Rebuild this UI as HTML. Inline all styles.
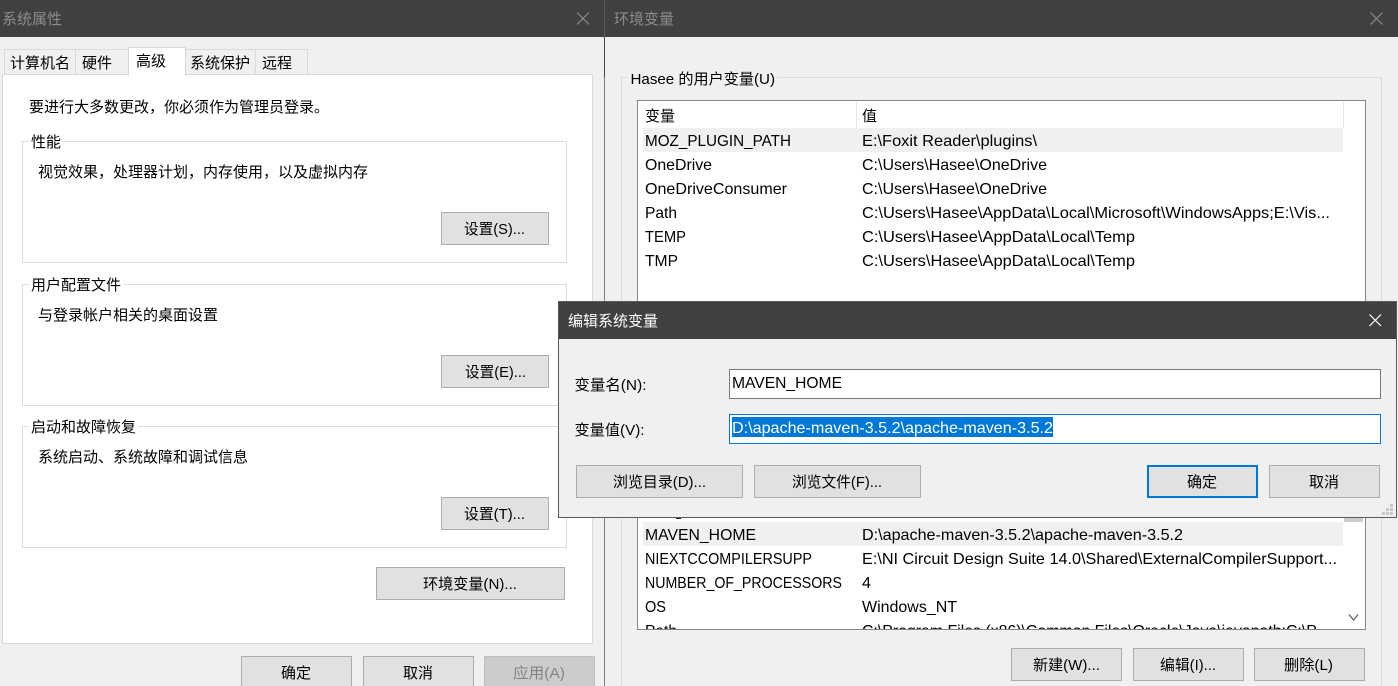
<!DOCTYPE html>
<html lang="zh-CN">
<head>
<meta charset="utf-8">
<title>环境变量</title>
<style>
html,body{margin:0;padding:0;width:1398px;height:686px;overflow:hidden;background:#f0f0f0}
svg{display:block;overflow:hidden}
text{font-family:"Liberation Sans","Noto Sans CJK SC",sans-serif;font-size:15px;fill:#000;white-space:pre}
text.l{font-size:16px}
.g{fill:#8c8c8c}
.w{fill:#fff}
.d{fill:#838383}
.btn{fill:#e1e1e1;stroke:#adadad;stroke-width:1}
.grp{fill:#fff;stroke:#dcdcdc;stroke-width:1}
.tab{fill:#f0f0f0;stroke:#d9d9d9;stroke-width:1}
.x{stroke-width:1.2;fill:none}
</style>
</head>
<body>
<svg width="1398" height="686" viewBox="0 0 1398 686" xmlns="http://www.w3.org/2000/svg">
<defs>
<clipPath id="listclip"><rect x="638" y="101" width="727" height="528"/></clipPath>
</defs>
<rect width="1398" height="686" fill="#f0f0f0"/>

<!-- Left window -->
<rect x="0" y="0" width="1398" height="37" fill="#404040"/>
<rect x="604" y="0" width="1" height="37" fill="#5a5a5a"/>
<rect x="604" y="37" width="1" height="40" fill="#444"/>
<rect x="604" y="77" width="1" height="609" fill="#808080"/>
<text x="2" y="24" class="g">系统属性</text>
<path d="M577 12.500L589 24.500M589 12.500L577 24.500" class="x" stroke="#8c8c8c"/>

<rect x="2.500" y="74.500" width="590" height="569" fill="#fff" stroke="#d9d9d9"/>
<rect x="4.500" y="49.500" width="71" height="25" class="tab"/>
<rect x="75.500" y="49.500" width="53" height="25" class="tab"/>
<rect x="185.500" y="49.500" width="70" height="25" class="tab"/>
<rect x="255.500" y="49.500" width="52" height="25" class="tab"/>
<rect x="128.500" y="47.500" width="57" height="28" fill="#fff" stroke="#d9d9d9"/>
<rect x="129" y="73" width="56" height="4" fill="#fff"/>
<text x="10" y="68">计算机名</text>
<text x="82" y="68">硬件</text>
<text x="136" y="66">高级</text>
<text x="190" y="68">系统保护</text>
<text x="262" y="68">远程</text>

<text x="29" y="112">要进行大多数更改，你必须作为管理员登录。</text>

<rect x="22.500" y="141.500" width="544" height="121" class="grp"/>
<rect x="29" y="135" width="34" height="14" fill="#fff"/>
<text x="31" y="147">性能</text>
<text x="38" y="177">视觉效果，处理器计划，内存使用，以及虚拟内存</text>
<rect x="441.500" y="212.500" width="107" height="32" class="btn"/>
<text x="464" y="234" textLength="61" lengthAdjust="spacingAndGlyphs">设置(S)...</text>

<rect x="22.500" y="284.500" width="544" height="121" class="grp"/>
<rect x="29" y="278" width="94" height="14" fill="#fff"/>
<text x="31" y="290">用户配置文件</text>
<text x="38" y="320">与登录帐户相关的桌面设置</text>
<rect x="441.500" y="355.500" width="107" height="32" class="btn"/>
<text x="465" y="377" textLength="61" lengthAdjust="spacingAndGlyphs">设置(E)...</text>

<rect x="22.500" y="426.500" width="544" height="121" class="grp"/>
<rect x="29" y="420" width="109" height="14" fill="#fff"/>
<text x="31" y="432">启动和故障恢复</text>
<text x="38" y="462">系统启动、系统故障和调试信息</text>
<rect x="441.500" y="497.500" width="107" height="32" class="btn"/>
<text x="464" y="519" textLength="61" lengthAdjust="spacingAndGlyphs">设置(T)...</text>

<rect x="376.500" y="567.500" width="188" height="32" class="btn"/>
<text x="423" y="589" textLength="94" lengthAdjust="spacingAndGlyphs">环境变量(N)...</text>

<rect x="241" y="656" width="111" height="30" fill="#e1e1e1"/>
<path d="M241.500 686V656.500H351.500V686" fill="none" stroke="#adadad"/>
<text x="281" y="678">确定</text>
<rect x="363" y="656" width="111" height="30" fill="#e1e1e1"/>
<path d="M363.500 686V656.500H473.500V686" fill="none" stroke="#adadad"/>
<text x="403" y="678">取消</text>
<rect x="484" y="656" width="111" height="30" fill="#cccccc"/>
<path d="M484.500 686V656.500H594.500V686" fill="none" stroke="#bfbfbf"/>
<text x="513" y="678" class="d" textLength="52" lengthAdjust="spacingAndGlyphs">应用(A)</text>

<!-- Right window -->
<text x="614" y="24" class="g">环境变量</text>
<path d="M1370.500 12.500L1382.500 24.500M1382.500 12.500L1370.500 24.500" class="x" stroke="#8c8c8c"/>

<path d="M621.500 686V77.500H1381.500V686" fill="none" stroke="#dcdcdc"/>
<rect x="628" y="70" width="149" height="16" fill="#f0f0f0"/>
<text x="630.500" y="84" textLength="144.500" lengthAdjust="spacingAndGlyphs">Hasee 的用户变量(U)</text>

<rect x="637.500" y="100.500" width="728" height="529" fill="#fff" stroke="#828790"/>
<rect x="856" y="102" width="1" height="26" fill="#e5e5e5"/>
<rect x="1343" y="102" width="1" height="26" fill="#e5e5e5"/>
<text x="645" y="121">变量</text>
<text x="862" y="121">值</text>

<rect x="643" y="128" width="700" height="24" fill="#f0f0f0"/>
<g>
<text class="l" x="645" y="146" textLength="146" lengthAdjust="spacingAndGlyphs">MOZ_PLUGIN_PATH</text>
<text class="l" x="862" y="146" textLength="175" lengthAdjust="spacingAndGlyphs">E:\Foxit Reader\plugins\</text>
<text class="l" x="645" y="170" textLength="67" lengthAdjust="spacingAndGlyphs">OneDrive</text>
<text class="l" x="862" y="170" textLength="185" lengthAdjust="spacingAndGlyphs">C:\Users\Hasee\OneDrive</text>
<text class="l" x="645" y="194" textLength="142" lengthAdjust="spacingAndGlyphs">OneDriveConsumer</text>
<text class="l" x="862" y="194" textLength="185" lengthAdjust="spacingAndGlyphs">C:\Users\Hasee\OneDrive</text>
<text class="l" x="645" y="218" textLength="32" lengthAdjust="spacingAndGlyphs">Path</text>
<text class="l" x="862" y="218" textLength="468" lengthAdjust="spacingAndGlyphs">C:\Users\Hasee\AppData\Local\Microsoft\WindowsApps;E:\Vis...</text>
<text class="l" x="645" y="242" textLength="41" lengthAdjust="spacingAndGlyphs">TEMP</text>
<text class="l" x="862" y="242" textLength="273" lengthAdjust="spacingAndGlyphs">C:\Users\Hasee\AppData\Local\Temp</text>
<text class="l" x="645" y="266" textLength="33" lengthAdjust="spacingAndGlyphs">TMP</text>
<text class="l" x="862" y="266" textLength="273" lengthAdjust="spacingAndGlyphs">C:\Users\Hasee\AppData\Local\Temp</text>
</g>

<rect x="643" y="522" width="700" height="24" fill="#f0f0f0"/>
<rect x="1344" y="510" width="19" height="12" fill="#cdcdcd"/>
<path d="M1349 614.500L1353.500 620L1358 614.500" fill="none" stroke="#606060" stroke-width="1.300"/>
<g clip-path="url(#listclip)">
<text class="l" x="645" y="540" textLength="111" lengthAdjust="spacingAndGlyphs">MAVEN_HOME</text>
<text class="l" x="862" y="540" textLength="321" lengthAdjust="spacingAndGlyphs">D:\apache-maven-3.5.2\apache-maven-3.5.2</text>
<text class="l" x="645" y="564" textLength="167" lengthAdjust="spacingAndGlyphs">NIEXTCCOMPILERSUPP</text>
<text class="l" x="862" y="564" textLength="475" lengthAdjust="spacingAndGlyphs">E:\NI Circuit Design Suite 14.0\Shared\ExternalCompilerSupport...</text>
<text class="l" x="645" y="588" textLength="197" lengthAdjust="spacingAndGlyphs">NUMBER_OF_PROCESSORS</text>
<text class="l" x="862" y="588" textLength="9" lengthAdjust="spacingAndGlyphs">4</text>
<text class="l" x="645" y="612" textLength="21" lengthAdjust="spacingAndGlyphs">OS</text>
<text class="l" x="862" y="612" textLength="95" lengthAdjust="spacingAndGlyphs">Windows_NT</text>
<text class="l" x="645" y="636" textLength="32" lengthAdjust="spacingAndGlyphs">Path</text>
<text class="l" x="862" y="636" textLength="466" lengthAdjust="spacingAndGlyphs">C:\Program Files (x86)\Common Files\Oracle\Java\javapath;C:\P...</text>
</g>

<rect x="1011.500" y="648.500" width="110" height="32" class="btn"/>
<text x="1033" y="670" textLength="67" lengthAdjust="spacingAndGlyphs">新建(W)...</text>
<rect x="1133.500" y="648.500" width="110" height="32" class="btn"/>
<text x="1160" y="670" textLength="56" lengthAdjust="spacingAndGlyphs">编辑(I)...</text>
<rect x="1254.500" y="648.500" width="110" height="32" class="btn"/>
<text x="1284" y="670" textLength="49" lengthAdjust="spacingAndGlyphs">删除(L)</text>

<!-- Dialog -->
<rect x="558.500" y="301.500" width="838" height="216" fill="#f0f0f0" stroke="#5a5a5a"/>
<rect x="559" y="302" width="837" height="37" fill="#404040"/>
<rect x="676" y="518" width="5" height="1" fill="#222"/>
<text x="568" y="326" class="w">编辑系统变量</text>
<path d="M1369.500 314.500L1381 326M1381 314.500L1369.500 326" class="x" stroke="#fff"/>

<text x="574.500" y="390" textLength="72" lengthAdjust="spacingAndGlyphs">变量名(N):</text>
<rect x="729.500" y="369.500" width="651" height="29" fill="#fff" stroke="#7a7a7a"/>
<text class="l" x="732" y="388" textLength="110" lengthAdjust="spacingAndGlyphs">MAVEN_HOME</text>

<text x="574.500" y="435" textLength="70" lengthAdjust="spacingAndGlyphs">变量值(V):</text>
<rect x="729.500" y="414.500" width="651" height="29" fill="#fff" stroke="#0078d7"/>
<rect x="732" y="417" width="321" height="20" fill="#0078d7"/>
<text class="l w" x="732" y="433" textLength="321" lengthAdjust="spacingAndGlyphs">D:\apache-maven-3.5.2\apache-maven-3.5.2</text>

<rect x="576.500" y="465.500" width="166" height="32" class="btn"/>
<text x="613" y="487" textLength="93" lengthAdjust="spacingAndGlyphs">浏览目录(D)...</text>
<rect x="754.500" y="465.500" width="166" height="32" class="btn"/>
<text x="792" y="487" textLength="90" lengthAdjust="spacingAndGlyphs">浏览文件(F)...</text>
<rect x="1148" y="466" width="109" height="31" fill="#e1e1e1" stroke="#0078d7" stroke-width="2"/>
<text x="1187" y="487">确定</text>
<rect x="1269.500" y="465.500" width="110" height="32" class="btn"/>
<text x="1309" y="487">取消</text>

<g fill="#c8c8c8">
<rect x="1390" y="504" width="3" height="3"/>
<rect x="1386" y="508" width="3" height="3"/>
<rect x="1390" y="508" width="3" height="3"/>
<rect x="1382" y="512" width="3" height="3"/>
<rect x="1386" y="512" width="3" height="3"/>
<rect x="1390" y="512" width="3" height="3"/>
</g>
</svg>
</body>
</html>
